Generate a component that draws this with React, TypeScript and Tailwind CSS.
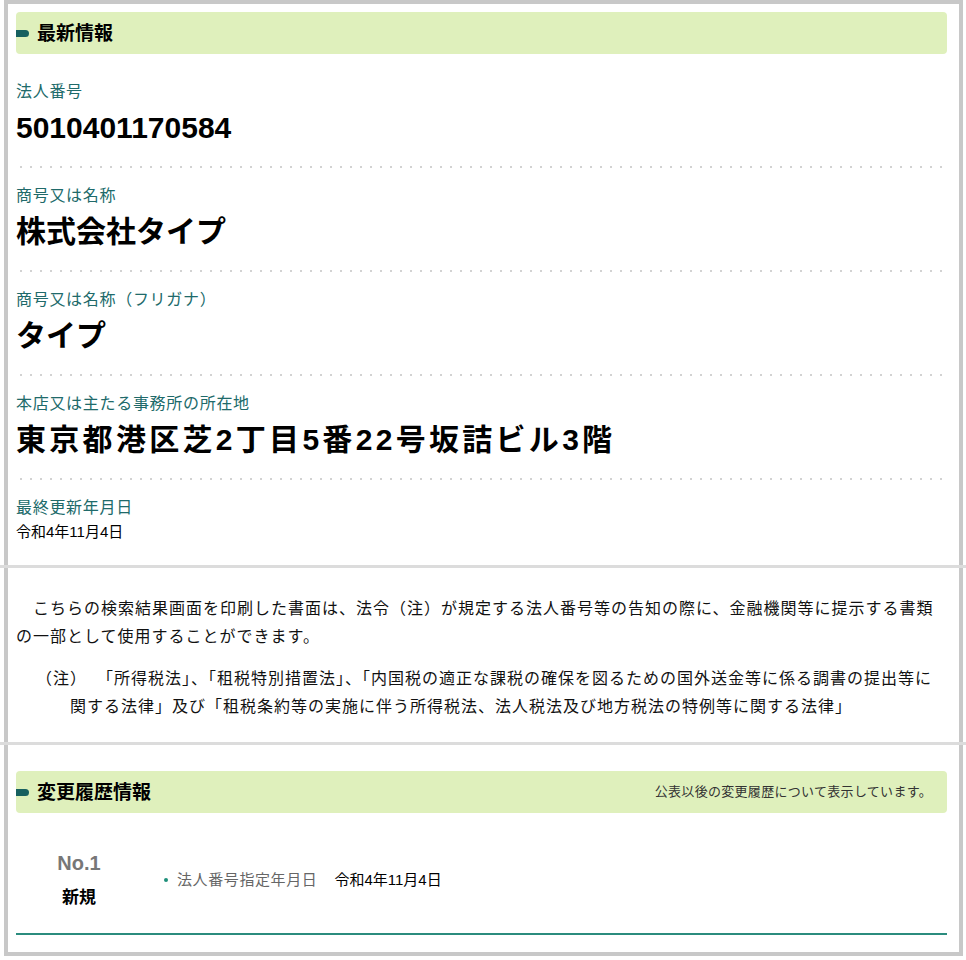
const fields = [
  { label: "法人番号", value: "5010401170584", wide: false },
  { label: "商号又は名称", value: "株式会社タイプ", wide: false },
  { label: "商号又は名称（フリガナ）", value: "タイプ", wide: false },
  { label: "本店又は主たる事務所の所在地", value: "東京都港区芝2丁目5番22号坂詰ビル3階", wide: true },
];

const Dots = () => (
  <div className="h-[2px] bg-[radial-gradient(circle,#d2d2d2_1px,transparent_1.5px)] bg-[length:10px_2px] bg-repeat-x" />
);

const SectionHeader = ({ title, note }: { title: string; note?: string }) => (
  <div className="flex h-[42px] items-center rounded-[4px] bg-[#dff0bc]">
    <span className="h-[7px] w-[13px] rounded-r-full bg-[#17605f]" />
    <h2 className="ml-2 text-[19px] font-bold leading-none text-black">{title}</h2>
    {note && <span className="ml-auto pr-[15px] text-[13px] tracking-[0.3px] text-[#333]">{note}</span>}
  </div>
);

const App = () => {
  return (
    <div className="min-h-screen w-full bg-white font-['Liberation_Sans','Noto_Sans_CJK_JP',sans-serif] text-black">
      <div className="ml-[4px] w-[959px] border-4 border-[#c8c8c8] pb-[17px]">
        {/* latest info */}
        <section className="pl-2 pr-3 pt-2">
          <SectionHeader title="最新情報" />
          <div className="mt-[10px]">
            {fields.map((f) => (
              <div key={f.label}>
                <div className="pt-[18px] pb-[20px]">
                  <div className="h-[20px] text-[16px] leading-[20px] tracking-[0.7px] text-[#206a6a]">{f.label}</div>
                  <div
                    className={
                      f.wide
                        ? "mt-[8px] h-[36px] whitespace-nowrap text-[30px] font-bold leading-[36px] tracking-[3.3px]"
                        : "mt-[8px] h-[36px] whitespace-nowrap text-[30px] font-bold leading-[36px]"
                    }
                  >
                    {f.value}
                  </div>
                </div>
                <Dots />
              </div>
            ))}
            <div className="pt-[18px] pb-[23px]">
              <div className="h-[20px] text-[16px] leading-[20px] tracking-[0.7px] text-[#206a6a]">最終更新年月日</div>
              <div className="mt-[4px] text-[15px] leading-[20px]">令和4年11月4日</div>
            </div>
          </div>
        </section>

        <div className="-mx-[8px] h-[3px] bg-[#dcdcdc]" />

        {/* notice */}
        <section className="pl-2 pr-3 pt-[27px] pb-[21px] text-[16px] leading-[28px] tracking-[1px] text-[#111]">
          <p className="indent-[17px]">
            こちらの検索結果画面を印刷した書面は、法令（注）が規定する法人番号等の告知の際に、金融機関等に提示する書類
            <br />
            の一部として使用することができます。
          </p>
          <p className="mt-[14px] pl-[54px] -indent-[34px]">
            （注）
            <span className="inline-block w-[10px]" />
            「所得税法」、「租税特別措置法」、「内国税の適正な課税の確保を図るための国外送金等に係る調書の提出等に
            <br />
            関する法律」及び「租税条約等の実施に伴う所得税法、法人税法及び地方税法の特例等に関する法律」
          </p>
        </section>

        <div className="-mx-[8px] h-[3px] bg-[#dcdcdc]" />

        {/* history */}
        <section className="pl-2 pr-3 pt-[26px]">
          <SectionHeader title="変更履歴情報" note="公表以後の変更履歴について表示しています。" />
          <div className="mt-[38px] flex items-center border-b-2 border-[#2b8c7e] pb-[24px]">
            <div className="flex w-[126px] flex-col items-center">
              <span className="text-[20px] font-bold leading-[24px] text-[#777]">No.1</span>
              <span className="mt-[12px] text-[17px] font-bold leading-[22px]">新規</span>
            </div>
            <ul className="ml-[22px] flex items-center text-[15px] leading-[20px]">
              <li className="flex items-center">
                <span className="h-[4px] w-[4px] rounded-full bg-[#1e8f7a]" />
                <span className="ml-[9px] tracking-[0.6px] text-[#666]">法人番号指定年月日</span>
                <span className="ml-[17px]">令和4年11月4日</span>
              </li>
            </ul>
          </div>
        </section>
      </div>
    </div>
  );
};

export default App;
